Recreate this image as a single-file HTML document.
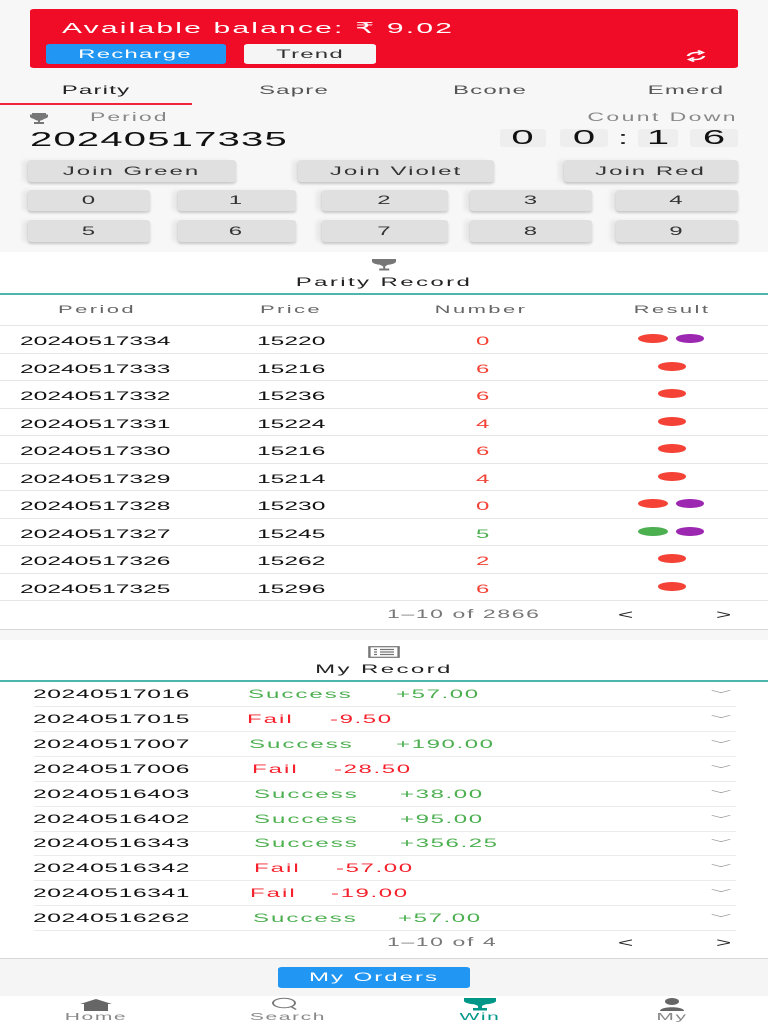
<!DOCTYPE html>
<html><head><meta charset="utf-8">
<style>
*{margin:0;padding:0;box-sizing:border-box}
html,body{width:768px;height:1024px;overflow:hidden;background:#fff}
#w{position:absolute;left:0;top:0;width:384px;height:1024px;transform:scaleX(2);transform-origin:0 0;font-family:"Liberation Sans",sans-serif;color:#222;letter-spacing:.6px}
.a{position:absolute;white-space:nowrap}
.btn{position:absolute;background:#e0e0e0;border-radius:2px;box-shadow:0 2px 2px rgba(0,0,0,.18),-3px 0 3px rgba(0,0,0,.06);font-size:12px;color:#333;text-align:center}
.cd{position:absolute;top:129px;height:18px;background:#eeeeee;border-radius:2px;font-size:20px;line-height:18px;text-align:center;color:#111;letter-spacing:0}
.row{position:absolute;left:0;width:384px;border-bottom:1px solid #e6e6e6}
.t{font-size:12px;color:#111;letter-spacing:.4px}
.n{letter-spacing:0;font-size:12.3px}
.dot{position:absolute;width:14.5px;height:9px;border-radius:50%}
.r{background:#f44336}.p{background:#9c27b0}.g{background:#4caf50}
.mr{position:absolute;left:16.5px;width:351px;height:25px;border-bottom:1px solid #ececec}
.chev{position:absolute;width:7px;height:7px;border-right:1px solid #999;border-bottom:1px solid #999;transform:scaleY(.5) rotate(45deg)}
</style></head><body>
<div id="w">
<div class="a" style="left:0;top:0;width:384px;height:252px;background:#f7f7f7"></div>
<div class="a" style="left:15px;top:9px;width:354px;height:59px;background:#f00c27;border-radius:2px"></div>
<div class="a" style="left:31px;top:19px;font-size:15px;color:#fff;letter-spacing:1.1px">Available balance: ₹ 9.02</div>
<div class="a" style="left:22.5px;top:44px;width:90px;height:20px;background:#2196f3;border-radius:2px;color:#fff;font-size:12px;line-height:20px;text-align:center">Recharge</div>
<div class="a" style="left:122px;top:44px;width:66px;height:20px;background:#f5f5f5;border-radius:2px;color:#333;font-size:12px;line-height:20px;text-align:center">Trend</div>
<svg class="a" style="left:342px;top:48px" width="12" height="16" viewBox="0 0 12 16"><path d="M2 8 Q3 4 8 4.5 M7 2.5 L9.5 4.5 L7 6.5 M10 8 Q9 12 4 11.5 M5 9.5 L2.5 11.5 L5 13.5" stroke="#fff" stroke-width="1.4" fill="none"/></svg>
<div class="a" style="left:0;top:83px;width:96px;text-align:center;font-size:12px;color:#222">Parity</div>
<div class="a" style="left:99px;top:83px;width:96px;text-align:center;font-size:12px;color:#555">Sapre</div>
<div class="a" style="left:197px;top:83px;width:96px;text-align:center;font-size:12px;color:#555">Bcone</div>
<div class="a" style="left:295px;top:83px;width:96px;text-align:center;font-size:12px;color:#555">Emerd</div>
<div class="a" style="left:0;top:103px;width:96px;height:1.5px;background:#f0243a"></div>
<svg class="a" style="left:15px;top:112px" width="9" height="13" viewBox="0 0 9 13"><path d="M1 1h7v1.5H9v2c0 1-1 2-2 2.5C6.5 8 5.5 8.5 5 8.6V10h2v2H2v-2h2V8.6C3.5 8.5 2.5 8 2 7C1 6.5 0 5.5 0 4.5v-2h1z" fill="#777"/></svg>
<div class="a" style="left:45px;top:112px;font-size:11.5px;color:#888;letter-spacing:1px">Period</div>
<div class="a" style="right:15px;top:112px;font-size:11.5px;color:#888;letter-spacing:1.2px">Count Down</div>
<div class="a" style="left:15px;top:129px;font-size:20px;color:#111;letter-spacing:.6px">20240517335</div>
<div class="cd" style="left:250px;width:22.5px">0</div>
<div class="cd" style="left:280px;width:24px">0</div>
<div class="a" style="left:309px;top:129px;font-size:18px;line-height:18px">:</div>
<div class="cd" style="left:319px;width:20px">1</div>
<div class="cd" style="left:345px;width:24px">6</div>
<div class="btn" style="left:14px;top:160px;width:103.5px;height:22px;line-height:22px;letter-spacing:1px">Join Green</div>
<div class="btn" style="left:149px;top:160px;width:98px;height:22px;line-height:22px;letter-spacing:1px">Join Violet</div>
<div class="btn" style="left:281.5px;top:160px;width:87.5px;height:22px;line-height:22px;letter-spacing:1px">Join Red</div>
<div class="btn" style="left:14px;top:190px;width:61px;height:21px;line-height:21px">0</div>
<div class="btn" style="left:88.5px;top:190px;width:59px;height:21px;line-height:21px">1</div>
<div class="btn" style="left:161px;top:190px;width:62.5px;height:21px;line-height:21px">2</div>
<div class="btn" style="left:235px;top:190px;width:61px;height:21px;line-height:21px">3</div>
<div class="btn" style="left:307.5px;top:190px;width:61.5px;height:21px;line-height:21px">4</div>
<div class="btn" style="left:14px;top:220px;width:61px;height:22px;line-height:22px">5</div>
<div class="btn" style="left:88.5px;top:220px;width:59px;height:22px;line-height:22px">6</div>
<div class="btn" style="left:161px;top:220px;width:62.5px;height:22px;line-height:22px">7</div>
<div class="btn" style="left:235px;top:220px;width:61px;height:22px;line-height:22px">8</div>
<div class="btn" style="left:307.5px;top:220px;width:61.5px;height:22px;line-height:22px">9</div>

<svg class="a" style="left:186px;top:259px" width="12" height="13" viewBox="0 0 12 13"><path d="M0 0h12v2.5c0 1.5-2 3-4 3.2C7.2 6.5 6.8 7 6.6 7.5V9.5h2v2h-5v-2h2V7.5C5.2 7 4.8 6.5 4 5.7 2 5.5 0 4 0 2.5z" fill="#777"/></svg>
<div class="a" style="left:0;top:275px;width:384px;text-align:center;font-size:12px;color:#222;letter-spacing:1.2px">Parity Record</div>
<div class="a" style="left:0;top:293px;width:384px;height:1.5px;background:#4db6ac"></div>
<div class="a" style="left:0;top:304px;width:97px;text-align:center;font-size:11px;color:#666;letter-spacing:1.2px">Period</div>
<div class="a" style="left:97px;top:304px;width:97px;text-align:center;font-size:11px;color:#666;letter-spacing:1.2px">Price</div>
<div class="a" style="left:192px;top:304px;width:97px;text-align:center;font-size:11px;color:#666;letter-spacing:1.2px">Number</div>
<div class="a" style="left:288px;top:304px;width:96px;text-align:center;font-size:11px;color:#666;letter-spacing:1.2px">Result</div>
<div class="row" style="top:325px;height:1px;border-bottom:1.5px solid #e4e4e4"></div>

<div id="rows"></div>
<div class="a" style="left:193.5px;top:609px;font-size:11.5px;color:#777;letter-spacing:.8px">1–10 of 2866</div>
<div class="a" style="left:309px;top:607px;font-size:13px;color:#222">&lt;</div>
<div class="a" style="left:358px;top:607px;font-size:13px;color:#222">&gt;</div>
<div class="a" style="left:0;top:629px;width:384px;height:11px;background:#f7f7f7;border-top:1px solid #d8d8d8"></div>

<svg class="a" style="left:184px;top:646px" width="16" height="12" viewBox="0 0 16 12"><rect x="0.7" y="0.7" width="14.6" height="10.6" fill="none" stroke="#777" stroke-width="1.2"/><path d="M3 3.5h1.5M3 6h1.5M3 8.5h1.5M6 3.5h7M6 6h7M6 8.5h7" stroke="#777" stroke-width="1.2"/></svg>
<div class="a" style="left:0;top:662px;width:384px;text-align:center;font-size:12px;color:#222;letter-spacing:1.2px">My Record</div>
<div class="a" style="left:0;top:680px;width:384px;height:1.5px;background:#4db6ac"></div>
<div id="mrows"></div>
<div class="a" style="left:193.5px;top:937px;font-size:11.5px;color:#777;letter-spacing:.8px">1–10 of 4</div>
<div class="a" style="left:309px;top:935px;font-size:13px;color:#222">&lt;</div>
<div class="a" style="left:358px;top:935px;font-size:13px;color:#222">&gt;</div>
<div class="a" style="left:0;top:958px;width:384px;height:38px;background:#f5f5f5;border-top:1px solid #d8d8d8"></div>
<div class="a" style="left:139px;top:967px;width:96px;height:21px;background:#2196f3;border-radius:2px;color:#fff;font-size:12px;line-height:21px;text-align:center;letter-spacing:1px">My Orders</div>
<div class="a" style="left:0;top:996px;width:384px;height:28px;background:#fff"></div>
<svg class="a" style="left:40px;top:999px" width="16" height="12" viewBox="0 0 16 12"><path d="M8 0 L16 5 H14 V12 H2 V5 H0 Z" fill="#666"/></svg>
<div class="a" style="left:0;top:1011px;width:96px;text-align:center;font-size:10.5px;color:#888;letter-spacing:.8px">Home</div>
<svg class="a" style="left:135px;top:997px" width="14" height="13" viewBox="0 0 14 13"><ellipse cx="7" cy="6" rx="5.5" ry="4.8" fill="none" stroke="#777" stroke-width="1"/><path d="M10.5 9.5 L13 12.5" stroke="#777" stroke-width="1"/></svg>
<div class="a" style="left:96px;top:1011px;width:96px;text-align:center;font-size:10.5px;color:#888;letter-spacing:.8px">Search</div>
<svg class="a" style="left:232px;top:998px" width="16" height="13" viewBox="0 0 16 13"><path d="M0 0h16v3c0 1.5-2.5 3-5 3.2C10 7 9.2 7.5 9 8V10h2.5v2.5h-7V10H7V8C6.8 7.5 6 7 5 6.2 2.5 6 0 4.5 0 3z" fill="#009688"/></svg>
<div class="a" style="left:192px;top:1011px;width:96px;text-align:center;font-size:10.5px;color:#009688;letter-spacing:.8px">Win</div>
<svg class="a" style="left:330px;top:998px" width="12" height="13" viewBox="0 0 12 13"><circle cx="6" cy="3.5" r="3.5" fill="#666"/><path d="M0 13 C0 8 12 8 12 13z" fill="#666"/></svg>
<div class="a" style="left:288px;top:1011px;width:96px;text-align:center;font-size:10.5px;color:#888;letter-spacing:.8px">My</div>
</div>
<script>
var d=[["20240517334","15220","0","r",["r","p"]],["20240517333","15216","6","r",["r"]],["20240517332","15236","6","r",["r"]],["20240517331","15224","4","r",["r"]],["20240517330","15216","6","r",["r"]],["20240517329","15214","4","r",["r"]],["20240517328","15230","0","r",["r","p"]],["20240517327","15245","5","g",["g","p"]],["20240517326","15262","2","r",["r"]],["20240517325","15296","6","r",["r"]]];
var h="";d.forEach(function(r,i){var top=326+i*27.5;h+='<div class="row" style="top:'+top+'px;height:27.5px"></div>';var ty=top+8;
h+='<div class="a t n" style="left:10px;top:'+ty+'px">'+r[0]+'</div><div class="a t n" style="left:128.5px;top:'+ty+'px">'+r[1]+'</div><div class="a t" style="left:238px;top:'+ty+'px;width:6px;text-align:center;color:'+(r[3]=="g"?"#4caf50":"#f44336")+'">'+r[2]+'</div>';
if(r[4].length==2){h+='<div class="dot '+r[4][0]+'" style="left:319px;top:'+(top+8)+'px"></div><div class="dot '+r[4][1]+'" style="left:337.5px;top:'+(top+8)+'px"></div>';}else{h+='<div class="dot r" style="left:328.5px;top:'+(top+8)+'px"></div>';}});
document.getElementById("rows").innerHTML=h;
var m=[["20240517016","Success",124,"+57.00",198],["20240517015","Fail",123.5,"-9.50",165],["20240517007","Success",124.5,"+190.00",198],["20240517006","Fail",126,"-28.50",167],["20240516403","Success",127,"+38.00",200],["20240516402","Success",127,"+95.00",200],["20240516343","Success",127,"+356.25",200],["20240516342","Fail",127,"-57.00",168],["20240516341","Fail",125,"-19.00",165.5],["20240516262","Success",126.5,"+57.00",199]];
h="";m.forEach(function(r,i){var top=682+i*24.9;var c=r[1]=="Fail"?"#f5222d":"#4caf50";
h+='<div class="mr" style="top:'+top+'px"></div><div class="a t n" style="left:16.5px;top:'+(top+5)+'px;letter-spacing:.3px">'+r[0]+'</div><div class="a t" style="left:'+r[2]+'px;top:'+(top+5)+'px;color:'+c+';letter-spacing:1px">'+r[1]+'</div><div class="a t" style="left:'+r[4]+'px;top:'+(top+5)+'px;color:'+c+';letter-spacing:.8px">'+r[3]+'</div><div class="chev" style="left:357px;top:'+(top+5)+'px"></div>';});
document.getElementById("mrows").innerHTML=h;
</script>
</body></html>
